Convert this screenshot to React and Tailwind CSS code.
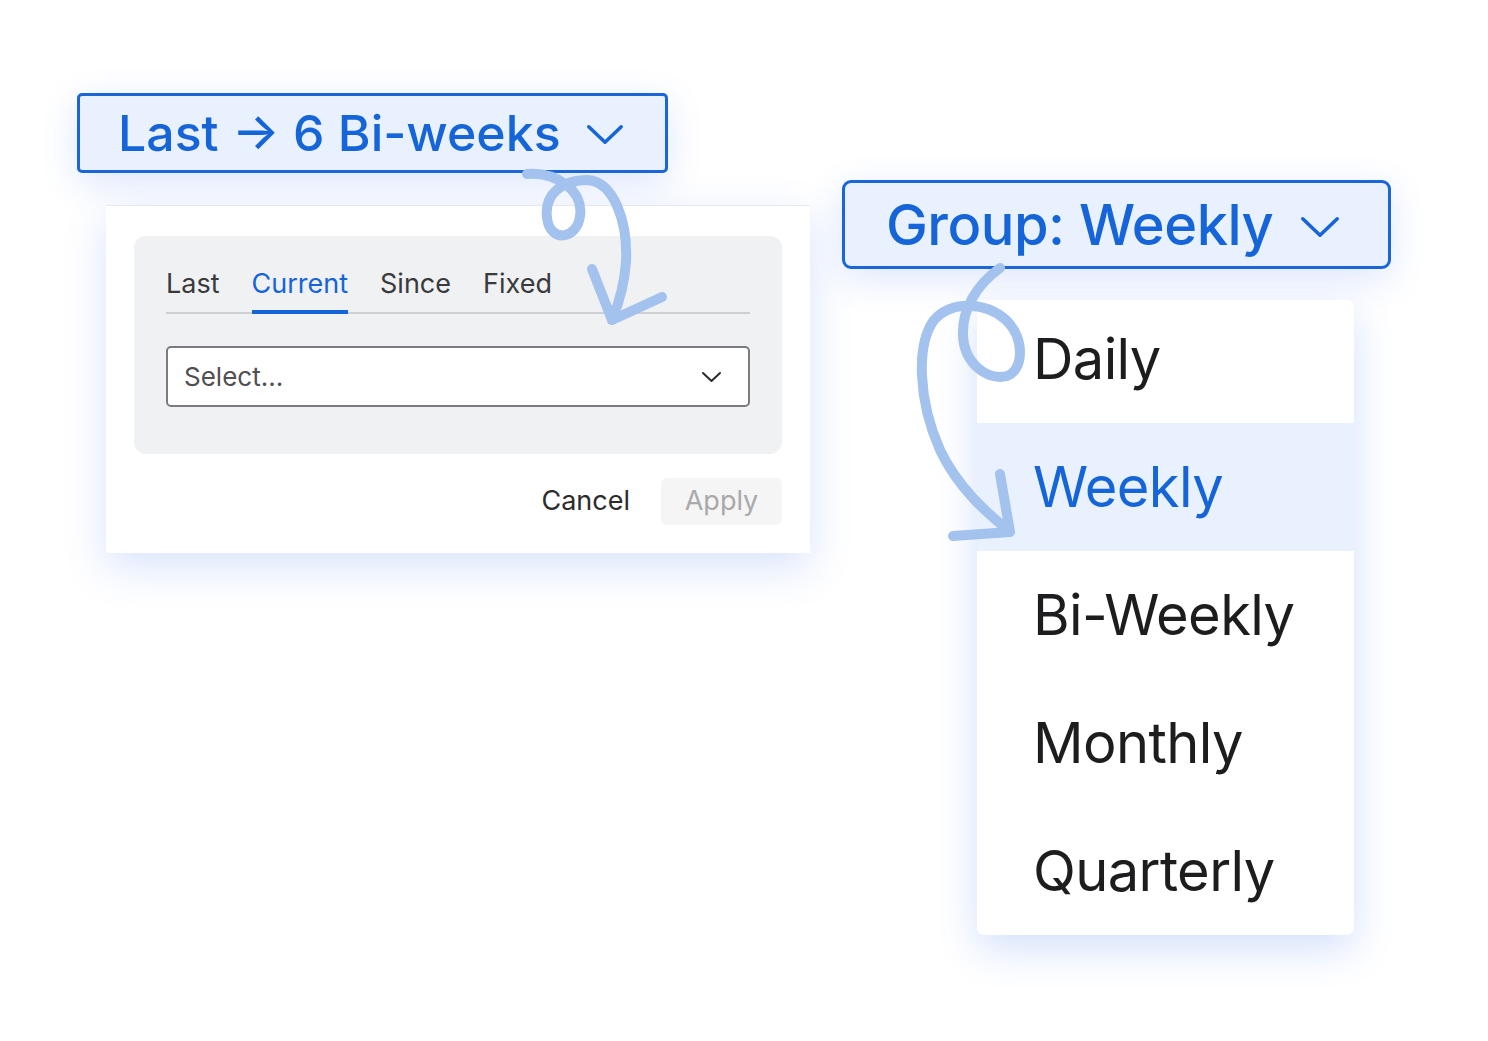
import React from "react";

const font = { fontFamily: "Inter, 'Noto Sans', 'Liberation Sans', sans-serif" };

function Chevron({ className, w = 36, h = 20, sw = 3.5 }) {
  return (
    <svg className={className} width={w} height={h} viewBox={`0 0 ${w} ${h}`} fill="none">
      <polyline
        points={`${sw / 2 + 1},${sw / 2 + 1} ${w / 2},${h - sw / 2 - 1} ${w - sw / 2 - 1},${sw / 2 + 1}`}
        stroke="currentColor"
        strokeWidth={sw}
        strokeLinecap="round"
        strokeLinejoin="round"
      />
    </svg>
  );
}

function TimePicker() {
  const tabs = ["Last", "Current", "Since", "Fixed"];
  return (
    <div className="flex flex-col">
      <button className="flex h-[80px] w-[591px] items-center justify-between rounded-[5px] border-[3px] border-[#1a66d9] bg-[#e8f1fd] pl-[38px] pr-[41px] text-[50px] font-medium tracking-[0px] text-[#1565d8] shadow-[0_10px_36px_rgba(37,99,235,0.16)]">
        <span className="leading-none">Last → 6 Bi-weeks</span>
        <Chevron className="text-[#1565d8] mt-[2px]" w={38} h={21} sw={3.5} />
      </button>
      <div className="ml-[29px] mt-[32px] flex w-[704px] flex-col border-t border-[#e6e8ec] bg-white px-[28px] pb-[28px] pt-[30px] shadow-[0_14px_40px_rgba(37,99,235,0.18)]">
        <div className="flex flex-col rounded-[12px] bg-[#f0f1f3] px-[32px] pb-[47px] pt-[30px]">
          <div className="flex gap-[32px] border-b-2 border-[#cfd0d3]">
            {tabs.map((t) => (
              <div
                key={t}
                className={
                  t === "Current"
                    ? "-mb-[2px] border-b-[4px] border-[#1565d8] pb-[8px] text-[27px] leading-[36px] text-[#1565d8]"
                    : "pb-[10px] text-[27px] leading-[36px] text-[#3a3a3c]"
                }
              >
                {t}
              </div>
            ))}
          </div>
          <div className="mt-[32px] flex h-[61px] items-center justify-between rounded-[5px] border-2 border-[#7a7b7e] bg-white pl-[16px] pr-[26px]">
            <span className="text-[26px] text-[#505053]">Select...</span>
            <Chevron className="text-[#2a2a2c]" w={21} h={12} sw={2} />
          </div>
        </div>
        <div className="mt-[24px] flex items-center justify-end gap-[31px]">
          <span className="text-[27px] text-[#2c2c2e]">Cancel</span>
          <div className="flex h-[47px] w-[121px] items-center justify-center rounded-[6px] bg-[#f5f5f5] text-[27px] text-[#a9a9ab]">
            Apply
          </div>
        </div>
      </div>
    </div>
  );
}

function GroupPicker() {
  const items = ["Daily", "Weekly", "Bi-Weekly", "Monthly", "Quarterly"];
  return (
    <div className="flex flex-col">
      <button className="flex h-[89px] w-[549px] items-center justify-between rounded-[9px] border-[3px] border-[#1a66d9] bg-[#e8f1fd] pl-[41px] pr-[48px] text-[56px] font-medium tracking-[-0.5px] text-[#1565d8] shadow-[0_10px_36px_rgba(37,99,235,0.16)]">
        <span className="leading-none">Group: Weekly</span>
        <Chevron className="text-[#1565d8] mt-[4px]" w={40} h={22} sw={3.5} />
      </button>
      <div className="ml-[135px] mt-[31px] flex w-[377px] flex-col overflow-hidden rounded-[7px] bg-white shadow-[0_14px_40px_rgba(37,99,235,0.2)]">
        {items.map((it, i) => (
          <div
            key={it}
            className={
              (i === 0 ? "h-[123px] pb-[6px] " : "h-[128px] ") +
              (it === "Weekly"
                ? "flex items-center bg-[#e8f1fd] pl-[56px] text-[56px] tracking-[-0.6px] text-[#1565d8]"
                : "flex items-center pl-[56px] text-[56px] tracking-[-0.6px] text-[#1d1d1f]")
            }
          >
            {it}
          </div>
        ))}
      </div>
    </div>
  );
}

export default function App() {
  return (
    <div className="relative h-[1041px] w-[1488px] overflow-hidden bg-white" style={font}>
      <div className="flex items-start gap-[32px] pl-[77px]">
        <div className="pt-[93px]">
          <TimePicker />
        </div>
        <div className="pt-[180px]">
          <GroupPicker />
        </div>
      </div>
      <svg
        className="pointer-events-none absolute left-0 top-0"
        width="1488"
        height="1041"
        viewBox="0 0 1488 1041"
        fill="none"
      >
        <g stroke="#a4c2ee" strokeWidth="10" strokeLinecap="round" strokeLinejoin="round">
          <path d="M 527 174 C 556 172, 584 190, 580 216 C 577 240, 550 243, 547 218 C 544 194, 562 180, 588 180 C 614 182, 628 222, 626 262 C 624 290, 617 308, 612 320" />
          <path d="M 592 269 L 612 320 L 662 297" />
          <path d="M 1000 268 C 976 285, 962 310, 963 335 C 964 364, 988 381, 1007 376 C 1024 370, 1025 338, 1006 320 C 986 302, 952 300, 934 320 C 916 345, 918 400, 940 450 C 958 488, 988 514, 1008 530" />
          <path d="M 1000 474 L 1010 532 L 953 536" />
        </g>
      </svg>
    </div>
  );
}
